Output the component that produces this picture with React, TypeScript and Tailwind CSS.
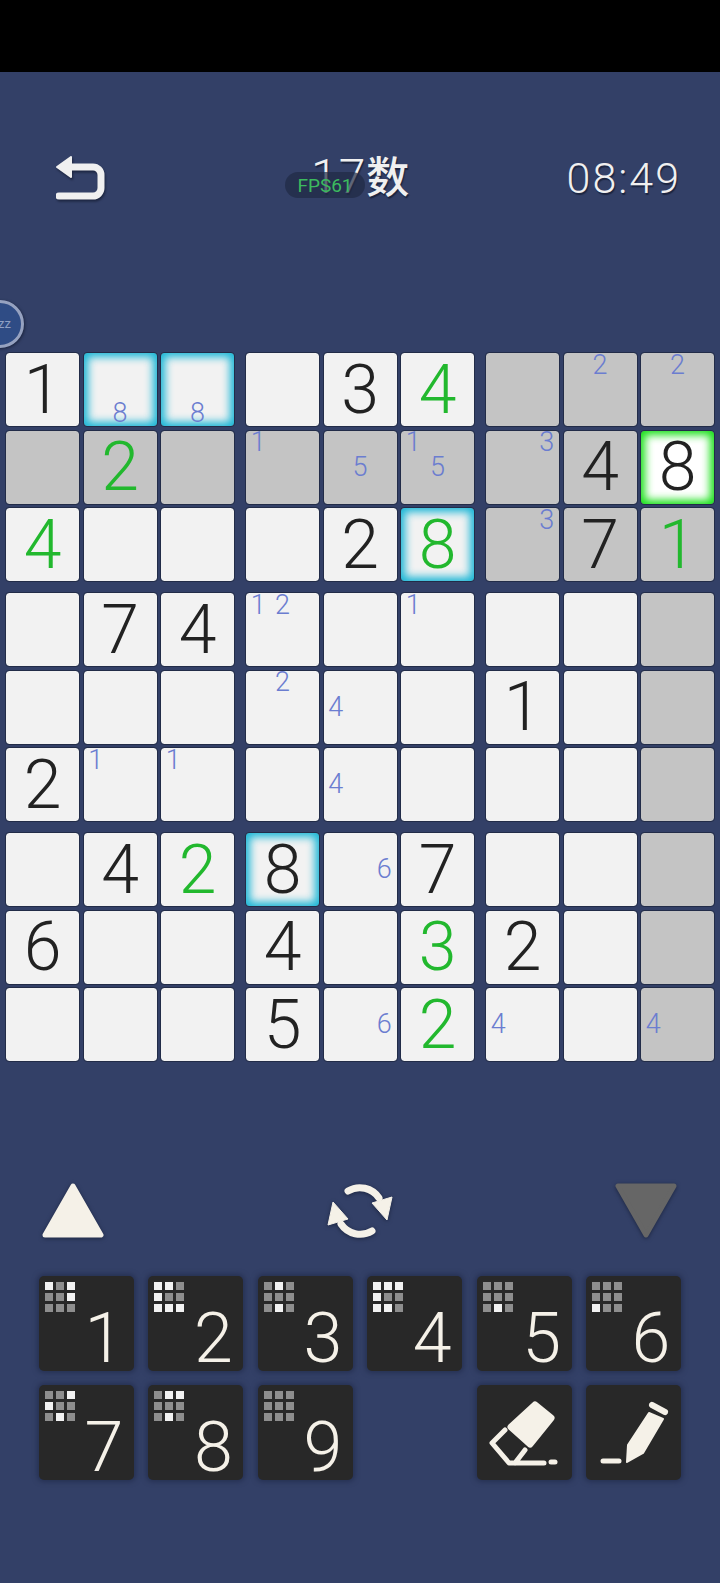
import React from "react";

// "#" grey cell, "*" cyan glow, "!" selected, "g" green digit, "n" pencil notes
const rows = [
  ["1", "*n8", "*n8", "", "3", "g4", "#", "#n2", "#n2"],
  ["#", "#g2", "#", "#n1", "#n5", "#n15", "#n3", "#4", "!8"],
  ["g4", "", "", "", "2", "*g8", "#n3", "#7", "#g1"],
  ["", "7", "4", "n12", "", "n1", "", "", "#"],
  ["", "", "", "n2", "n4", "", "1", "", "#"],
  ["2", "n1", "n1", "", "n4", "", "", "", "#"],
  ["", "4", "g2", "*8", "n6", "7", "", "", "#"],
  ["6", "", "", "4", "", "g3", "2", "", "#"],
  ["", "", "", "5", "n6", "g2", "n4", "", "#n4"],
];

const keys = [
  { n: "1", lit: [0, 2, 5] },
  { n: "2", lit: [0, 1, 3, 6, 7, 8] },
  { n: "3", lit: [1, 7] },
  { n: "4", lit: [0, 1, 2, 3, 6, 7] },
  { n: "5", lit: [7] },
  { n: "6", lit: [6] },
  { n: "7", lit: [2, 3, 7] },
  { n: "8", lit: [1, 2, 7] },
  { n: "9", lit: [] as number[] },
];

const Cell = ({ code }: { code: string }) => {
  const grey = code.includes("#");
  const glow = code.includes("*");
  const selected = code.includes("!");
  const green = code.includes("g");
  const isNotes = code.includes("n");
  const value = code.replace(/[#*!gn]/g, "");

  let bg = "bg-[#f2f2f2]";
  if (grey) bg = "bg-[#c4c4c4]";
  if (selected) bg = "bg-white";

  let ring = "";
  if (glow) ring = "shadow-[inset_0_0_9px_4px_#1ab6d6]";
  if (selected) ring = "shadow-[inset_0_0_9px_4px_#18e018]";

  return (
    <div className={`h-[73px] w-[73px] rounded-[3px] outline outline-1 outline-[#222c48] ${bg} ${ring}`}>
      {isNotes ? (
        <div className="grid h-full w-full grid-cols-3 grid-rows-3">
          {[1, 2, 3, 4, 5, 6, 7, 8, 9].map((n) => (
            <span key={n} className="flex items-center justify-center text-[27px] font-[350] leading-none text-[#6b7dd0]">
              {value.includes(String(n)) ? n : ""}
            </span>
          ))}
        </div>
      ) : (
        <div className={`flex h-full items-center justify-center text-[68px] font-[350] leading-none ${green ? "text-[#22b82e]" : "text-[#222222]"}`}>
          {value}
        </div>
      )}
    </div>
  );
};

const Key = ({ children }: { children: React.ReactNode }) => (
  <div className="relative h-[95px] w-[95px] rounded-[5px] bg-[#282828] shadow-[0_0_5px_2px_#263153]">{children}</div>
);

export default function App() {
  const blocks: string[][] = [];
  for (let br = 0; br < 3; br++) {
    for (let bc = 0; bc < 3; bc++) {
      const block: string[] = [];
      for (let r = 0; r < 3; r++) {
        block.push(...rows[br * 3 + r].slice(bc * 3, bc * 3 + 3));
      }
      blocks.push(block);
    }
  }

  return (
    <div className="relative flex h-[1583px] w-[720px] flex-col overflow-hidden bg-[#334067] font-['Roboto',sans-serif]">
      <div className="h-[72px] bg-black" />

      {/* header */}
      <div className="relative mt-[84px] flex h-[44px] items-center justify-between pl-[56px] pr-[39px]">
        <svg width="49" height="44" viewBox="0 0 49 44" className="drop-shadow-[1px_2px_1px_#1c2540]">
          <path d="M1 11 L15 1 V21 Z" fill="#f0f0f0" stroke="#f0f0f0" strokeWidth="2" strokeLinejoin="round" />
          <path d="M14 11 H37 a8 8 0 0 1 8 8 v13 a8 8 0 0 1 -8 8 H3" fill="none" stroke="#f0f0f0" strokeWidth="7" strokeLinecap="round" />
        </svg>
        <div className="absolute left-[311px] top-[-2px] flex items-baseline text-[#f0f0f0] [text-shadow:1px_2px_1px_#1c2540] font-['Roboto','Noto_Sans_CJK_SC',sans-serif]">
          <span className="text-[48px] font-[350] leading-[46px] tracking-[1px]">17</span>
          <span className="text-[43px] font-medium leading-[46px]">数</span>
        </div>
        <div className="text-[43px] font-light leading-[44px] tracking-[2px] text-[#f0f0f0] [text-shadow:1px_2px_1px_#1c2540]">08:49</div>
        <div className="absolute left-[285px] top-[16px] flex h-[26px] w-[80px] items-center justify-center rounded-full bg-[#1f2a44]/70 text-[19px] leading-none text-[#3cba5e]">
          FPS61
        </div>
      </div>

      {/* sleeping badge */}
      <div className="absolute left-[-24px] top-[300px] flex h-[48px] w-[48px] items-center justify-end rounded-full border-[3px] border-[#96a2c0] bg-[#2f4c85] pr-[10px] text-[13px] text-[#8fa0c4] shadow-[1px_1px_3px_#1c2540]">
        zz
      </div>

      {/* board */}
      <div className="mt-[153px] grid grid-cols-3 gap-[12px] px-[6px]">
        {blocks.map((block, i) => (
          <div key={i} className="grid grid-cols-3 gap-[4.5px]">
            {block.map((code, j) => (
              <Cell key={j} code={code} />
            ))}
          </div>
        ))}
      </div>

      {/* up / swap / down */}
      <div className="mt-[122px] flex h-[55px] items-center justify-between pl-[42px] pr-[43px]">
        <svg width="62" height="55" viewBox="0 0 62 55" className="drop-shadow-[0_1px_2px_#1c2540]">
          <polygon points="31,3 59,52 3,52" fill="#f5f1e8" stroke="#f5f1e8" strokeWidth="5" strokeLinejoin="round" />
        </svg>
        <svg width="66" height="56" viewBox="0 0 66 56" className="drop-shadow-[0_1px_2px_#1c2540]">
          <path d="M21 8 A23 23 0 0 1 52 15" fill="none" stroke="#f5f1e8" strokeWidth="7" strokeLinecap="round" />
          <polygon points="45,20 65,14 60,37" fill="#f5f1e8" stroke="#f5f1e8" strokeWidth="1" strokeLinejoin="round" />
          <path d="M45 48 A23 23 0 0 1 14 41" fill="none" stroke="#f5f1e8" strokeWidth="7" strokeLinecap="round" />
          <polygon points="21,36 1,42 6,19" fill="#f5f1e8" stroke="#f5f1e8" strokeWidth="1" strokeLinejoin="round" />
        </svg>
        <svg width="62" height="55" viewBox="0 0 62 55" className="drop-shadow-[0_1px_2px_#1c2540]">
          <polygon points="3,3 59,3 31,52" fill="#666666" stroke="#666666" strokeWidth="5" strokeLinejoin="round" />
        </svg>
      </div>

      {/* keypad */}
      <div className="mt-[38px] grid grid-cols-6 gap-x-[14.4px] gap-y-[14px] px-[39px]">
        {keys.map((k) => (
          <Key key={k.n}>
            <div className="absolute left-[6px] top-[6px] grid grid-cols-[repeat(3,8px)] gap-[3px]">
              {[0, 1, 2, 3, 4, 5, 6, 7, 8].map((c) => (
                <div key={c} className={`h-[8px] w-[8px] ${k.lit.includes(c) ? "bg-[#f2f2f2]" : "bg-[#8e8e8e]"}`} />
              ))}
            </div>
            <div className="absolute bottom-[-2px] right-0 w-[60px] text-center text-[70px] font-[350] leading-[70px] text-[#f5f1e8]">
              {k.n}
            </div>
          </Key>
        ))}
        <div />
        <Key>
          <svg width="95" height="95" viewBox="0 0 95 95">
            <polygon points="58,20 74,33 53,59 34,42" fill="#f5f1e8" stroke="#f5f1e8" strokeWidth="7" strokeLinejoin="round" />
            <path d="M28 45 L15 58 L32 78 H67 M48 65 L38 78" fill="none" stroke="#f5f1e8" strokeWidth="5" strokeLinecap="round" strokeLinejoin="round" />
            <path d="M74 77 H78" fill="none" stroke="#f5f1e8" strokeWidth="5" strokeLinecap="round" />
          </svg>
        </Key>
        <Key>
          <svg width="95" height="95" viewBox="0 0 95 95">
            <polygon points="63,28 77,34 57,68 41,77 42,60" fill="#f5f1e8" stroke="#f5f1e8" strokeWidth="2" strokeLinejoin="round" />
            <path d="M66 20 L79 27" fill="none" stroke="#f5f1e8" strokeWidth="6" strokeLinecap="round" />
            <path d="M17 76 H33" fill="none" stroke="#f5f1e8" strokeWidth="5" strokeLinecap="round" />
          </svg>
        </Key>
      </div>
    </div>
  );
}
